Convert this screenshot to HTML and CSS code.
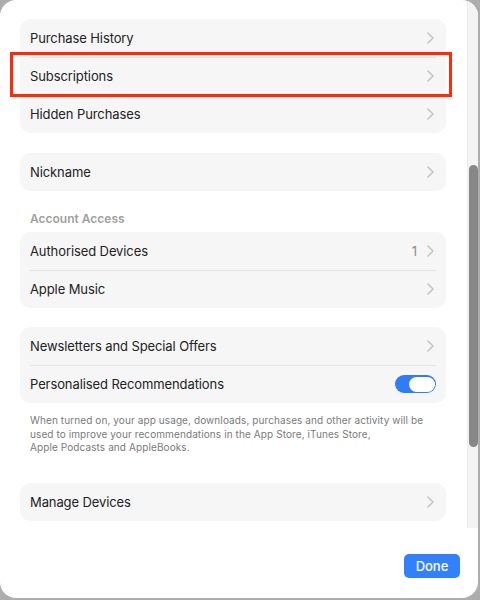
FILE: index.html
```html
<!DOCTYPE html>
<html lang="en">
<head>
    <meta charset="UTF-8">
    <meta name="viewport" content="width=device-width, initial-scale=1.0">
    <title>Account Settings</title>
    <link rel="stylesheet" href="styles.css">
</head>
<body>

    <div class="sheet">
        <div class="body-row">
            <div class="content">

                <!-- purchases -->
                <div class="group">
                    <div class="row">
                        <span class="label">Purchase History</span>
                        <svg class="chev" width="7" height="12" viewBox="0 0 7 12"><path d="M1 1 L6 6 L1 11" /></svg>
                    </div>
                    <div class="row marked">
                        <span class="label">Subscriptions</span>
                        <svg class="chev" width="7" height="12" viewBox="0 0 7 12"><path d="M1 1 L6 6 L1 11" /></svg>
                    </div>
                    <div class="row">
                        <span class="label">Hidden Purchases</span>
                        <svg class="chev" width="7" height="12" viewBox="0 0 7 12"><path d="M1 1 L6 6 L1 11" /></svg>
                    </div>
                </div>

                <div class="group">
                    <div class="row">
                        <span class="label">Nickname</span>
                        <svg class="chev" width="7" height="12" viewBox="0 0 7 12"><path d="M1 1 L6 6 L1 11" /></svg>
                    </div>
                </div>

                <!-- account access -->
                <div class="section-title">Account Access</div>
                <div class="group tight">
                    <div class="row">
                        <span class="label">Authorised Devices</span>
                        <span class="value">1</span>
                        <svg class="chev" width="7" height="12" viewBox="0 0 7 12"><path d="M1 1 L6 6 L1 11" /></svg>
                    </div>
                    <div class="row">
                        <span class="label">Apple Music</span>
                        <svg class="chev" width="7" height="12" viewBox="0 0 7 12"><path d="M1 1 L6 6 L1 11" /></svg>
                    </div>
                </div>

                <div class="group">
                    <div class="row">
                        <span class="label">Newsletters and Special Offers</span>
                        <svg class="chev" width="7" height="12" viewBox="0 0 7 12"><path d="M1 1 L6 6 L1 11" /></svg>
                    </div>
                    <div class="row switch-row">
                        <span class="label">Personalised Recommendations</span>
                        <span class="toggle on"><span class="knob"></span></span>
                    </div>
                </div>
                <p class="note">When turned on, your app usage, downloads, purchases and other activity will be used to improve your recommendations in the App Store, iTunes Store,<br>Apple Podcasts and AppleBooks.</p>

                <div class="group">
                    <div class="row">
                        <span class="label">Manage Devices</span>
                        <svg class="chev" width="7" height="12" viewBox="0 0 7 12"><path d="M1 1 L6 6 L1 11" /></svg>
                    </div>
                </div>

            </div>

            <!-- scrollbar -->
            <div class="scrollbar">
                <div class="thumb"></div>
            </div>
        </div>

        <div class="footer">
            <button class="done">Done</button>
        </div>
    </div>

</body>
</html>
```

FILE: styles.css
```css
html, body {
    margin: 0;
    padding: 0;
}

body {
    font-family: "Inter", "Liberation Sans", sans-serif;
    background-color: #adadad;
    width: 480px;
    height: 600px;
    overflow: hidden;
}

.sheet {
    width: 478px;
    height: 598px;
    background-color: #ffffff;
    border-radius: 16px;
    overflow: hidden;
    display: flex;
    flex-direction: column;
}

.body-row {
    display: flex;
    height: 528px;
}

.content {
    width: 426px;
    padding: 19px 21px 0 20px;
}

.group {
    background-color: #f6f6f6;
    border-radius: 10px;
    margin-bottom: 20px;
}

.group.tight {
    margin-bottom: 19px;
}

.row {
    height: 38px;
    display: flex;
    align-items: center;
    padding: 0 12px 0 10px;
    position: relative;
}

.row + .row::before {
    content: "";
    position: absolute;
    top: 0;
    left: 10px;
    right: 10px;
    height: 1px;
    background-color: #e3e3e3;
}

.label {
    flex: 1;
    font-size: 13px;
    color: #222222;
    letter-spacing: -0.1px;
}

.value {
    font-size: 13px;
    color: #8c8c8c;
    margin-right: 10px;
}

.chev path {
    fill: none;
    stroke: #c3c3c3;
    stroke-width: 1.5;
    stroke-linecap: round;
    stroke-linejoin: round;
}

/* annotation box */
.marked::after {
    content: "";
    position: absolute;
    top: -5px;
    left: -10px;
    right: -6px;
    bottom: -2px;
    border: 3px solid #ff2a0a;
    z-index: 2;
}

.section-title {
    font-size: 12px;
    font-weight: 600;
    color: #a0a0a0;
    line-height: 14px;
    padding: 1px 0 0 10px;
    margin-bottom: 6px;
}

.switch-row {
    padding-right: 10px;
}

.toggle {
    width: 41px;
    height: 18px;
    border-radius: 9px;
    background-color: #2f7cf6;
    display: flex;
    align-items: center;
    justify-content: flex-end;
    padding-right: 1px;
    box-sizing: border-box;
}

.knob {
    width: 26px;
    height: 15px;
    border-radius: 8px;
    background-color: #ffffff;
}

.group + .note {
    margin-top: -9px;
}

.note {
    font-size: 10px;
    line-height: 13.5px;
    letter-spacing: 0.1px;
    color: #7a7a7a;
    margin: 0 0 28px 0;
    padding-left: 10px;
}

.scrollbar {
    width: 11px;
    height: 528px;
    background-color: #f4f4f4;
    border-left: 1px solid #ececec;
    box-sizing: border-box;
    padding-top: 165px;
}

.thumb {
    width: 9px;
    margin-left: 0.5px;
    height: 282px;
    border-radius: 5px;
    background-color: #878787;
}

.footer {
    flex: 1;
    display: flex;
    justify-content: flex-end;
    align-items: flex-start;
    padding: 26px 18px 0 0;
}

.done {
    width: 56px;
    height: 24px;
    border: none;
    border-radius: 5px;
    background-color: #3381fa;
    color: #ffffff;
    font-family: "Inter", "Liberation Sans", sans-serif;
    font-size: 13px;
    font-weight: 500;
    padding: 0;
    cursor: pointer;
}
```
